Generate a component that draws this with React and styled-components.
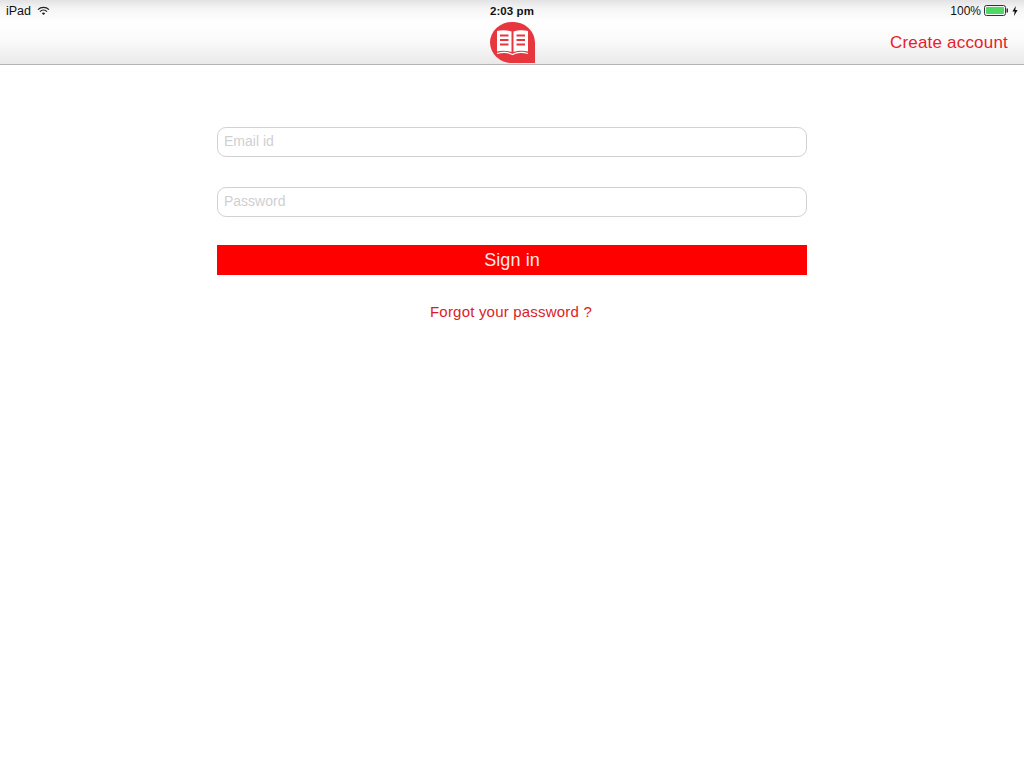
import React from "react";
import styled, { createGlobalStyle } from "styled-components";

const Global = createGlobalStyle`
    html, body {
        margin: 0;
        background: #fff;
        font-family: "Liberation Sans", Arial, sans-serif;
    }
`;

const Page = styled.div`
    width: 1024px;
    height: 768px;
    background: #fff;
    overflow: hidden;
`;

const Header = styled.header`
    height: 65px;
    box-sizing: border-box;
    border-bottom: 1px solid #b4b4b4;
    background: linear-gradient(#e2e2e4 0, #f4f4f4 8px, #ffffff 22px, #fbfbfb 40px, #e9e9e9 64px);
`;

const StatusBar = styled.div`
    height: 21px;
    display: grid;
    grid-template-columns: 1fr auto 1fr;
    align-items: center;
    padding: 0 6px;
    font-size: 12.5px;
    color: #111;
`;

const StatusLeft = styled.div`
    display: flex;
    align-items: center;
    gap: 6px;
`;

const StatusRight = styled.div`
    display: flex;
    align-items: center;
    justify-content: flex-end;
    gap: 3px;
    font-size: 12px;
`;

const Clock = styled.span`
    font-weight: 700;
    font-size: 11.5px;
    letter-spacing: 0.1px;
`;

const NavBar = styled.div`
    height: 43px;
    display: grid;
    grid-template-columns: 1fr auto 1fr;
    align-items: center;
    padding: 0 16px;
`;

const NavLink = styled.a`
    justify-self: end;
    color: #e8202a;
    font-size: 17px;
    letter-spacing: 0.2px;
    cursor: pointer;
`;

const Form = styled.form`
    width: 590px;
    margin: 62px auto 0;
    display: flex;
    flex-direction: column;
`;

const Field = styled.input`
    height: 30px;
    box-sizing: border-box;
    margin-bottom: 30px;
    padding: 0 6px 2px;
    border: 1px solid #d2d2d5;
    border-radius: 9px;
    outline: none;
    background: #fff;
    font: 14px "Liberation Sans", Arial, sans-serif;

    &::placeholder {
        color: #cfcfd2;
        opacity: 1;
    }
`;

const SignIn = styled.button`
    height: 30px;
    margin-top: -2px;
    border: 0;
    background: #ff0000;
    color: #ffe9e9;
    font: 18px "Liberation Sans", Arial, sans-serif;
    letter-spacing: 0.1px;
    cursor: pointer;
`;

const Forgot = styled.a`
    align-self: center;
    margin: 28px 2px 0 0;
    color: #dc1c24;
    font-size: 15px;
    line-height: 18px;
    letter-spacing: 0.2px;
    cursor: pointer;
`;

const WifiIcon = () => (
    <svg width="13" height="10" viewBox="0 0 13 10">
        <path d="M1 3.6 A8 8 0 0 1 12 3.6" fill="none" stroke="#222" strokeWidth="1.3" />
        <path d="M3 5.6 A5 5 0 0 1 10 5.6" fill="none" stroke="#222" strokeWidth="1.3" />
        <path d="M4.8 7.2 A2.5 2.5 0 0 1 8.2 7.2 L6.5 9 Z" fill="#222" />
    </svg>
);

const BatteryIcon = () => (
    <svg width="25" height="11" viewBox="0 0 25 11">
        <rect x="0.5" y="0.5" width="21" height="10" rx="2" fill="none" stroke="#333" />
        <rect x="2" y="2" width="18" height="7" rx="0.8" fill="#4cd964" />
        <rect x="22.5" y="3.5" width="1.5" height="4" fill="#333" />
    </svg>
);

const BoltIcon = () => (
    <svg width="6" height="10" viewBox="0 0 6 10">
        <path d="M3.8 0 L0.4 5.6 H2.6 L2 10 L5.6 4 H3.3 Z" fill="#111" />
    </svg>
);

const Logo = () => (
    <svg width="45" height="41" viewBox="0 0 45 41">
        <path d="M22 0 A22 20.5 0 0 1 45 20.5 V41 H22 A22 20.5 0 0 1 22 0 Z" fill="#e8363f" />
        <path d="M7 9 C11 8 17 8 21.5 9.5 V30 C17 28.5 11 28.5 7 29.5 Z" fill="#fff" />
        <path d="M23.5 9.5 C28 8 34 8 38 9 V29.5 C34 28.5 28 28.5 23.5 30 Z" fill="#fff" />
        <path d="M10 13.5 H18.5 M10 18 H18.5 M10 22.5 H18.5 M26.5 13.5 H35 M26.5 18 H35 M26.5 22.5 H35" stroke="#e8363f" strokeWidth="2" />
        <path d="M7 31.5 C12 30 18 30 22.5 32.5 C27 30 33 30 38 31.5" fill="none" stroke="#fff" strokeWidth="1.2" />
    </svg>
);

const App = () => {

    return (
        <Page>
            <Global />
            <Header>
                <StatusBar>
                    <StatusLeft>
                        <span>iPad</span>
                        <WifiIcon />
                    </StatusLeft>
                    <Clock>2:03 pm</Clock>
                    <StatusRight>
                        <span>100%</span>
                        <BatteryIcon />
                        <BoltIcon />
                    </StatusRight>
                </StatusBar>
                <NavBar>
                    <span />
                    <Logo />
                    <NavLink>Create account</NavLink>
                </NavBar>
            </Header>
            <Form>
                <Field placeholder="Email id" />
                <Field placeholder="Password" />
                <SignIn type="button">Sign in</SignIn>
                <Forgot>Forgot your password ?</Forgot>
            </Form>
        </Page>
    )
};

export default App;
